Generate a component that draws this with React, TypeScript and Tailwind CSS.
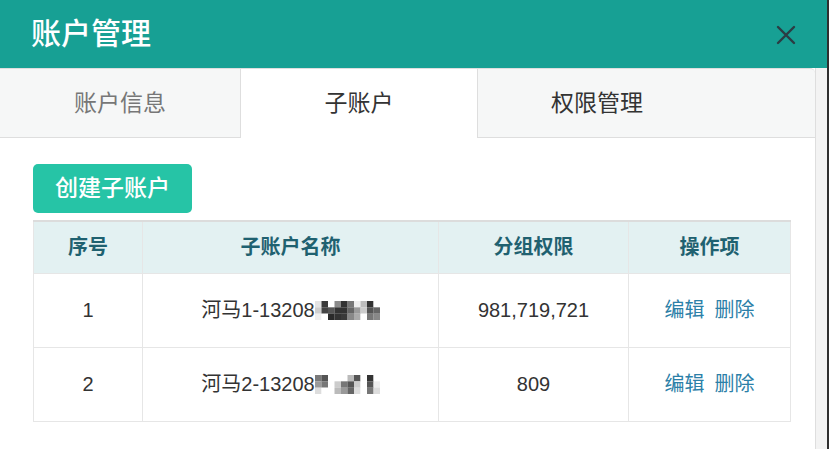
import React from "react";

const mosaics: string[][][] = [
  [
    ["#e4e4e4", "#3a3a3a", "#ffffff", "#8a8a8a", "#333333", "#777777", "#eeeeee", "#bdbdbd", "#333333", "#ffffff"],
    ["#cfcfcf", "#444444", "#555555", "#333333", "#333333", "#666666", "#9a9a9a", "#cccccc", "#555555", "#666666"],
    ["#eeeeee", "#ffffff", "#2a2a2a", "#333333", "#3a3a3a", "#888888", "#aaaaaa", "#ffffff", "#777777", "#888888"],
  ],
  [
    ["#7a7a7a", "#555555", "#ffffff", "#ffffff", "#ffffff", "#bbbbbb", "#555555", "#ffffff", "#333333", "#ffffff"],
    ["#9a9a9a", "#777777", "#ffffff", "#cccccc", "#777777", "#555555", "#cccccc", "#ffffff", "#555555", "#eeeeee"],
    ["#dddddd", "#ffffff", "#ffffff", "#bbbbbb", "#999999", "#666666", "#dddddd", "#ffffff", "#777777", "#dddddd"],
  ],
];

function Mosaic({ cells }: { cells: string[][] }) {
  return (
    <svg width="65" height="19" viewBox="0 0 65 19" className="inline-block align-middle -mt-[3px]">
      {cells.map((row, r) =>
        row.map((c, i) => (
          <rect key={`${r}-${i}`} x={i * 6.5} y={r * 6.33} width="6.6" height="6.4" fill={c} />
        ))
      )}
    </svg>
  );
}

const rows = [
  { id: 1, name: "河马1-13208", group: "981,719,721" },
  { id: 2, name: "河马2-13208", group: "809" },
];

export default function App() {
  return (
    <div className="w-[829px] h-[449px] flex bg-[#2f2f2f] overflow-hidden font-['Liberation_Sans','Noto_Sans_CJK_SC',sans-serif]">
      <div className="w-[827px] flex flex-col">
        {/* Header */}
        <div className="h-[68px] bg-[#17a094] flex items-center justify-between pl-[31px] pr-[31px]">
          <h1 className="text-[30px] leading-none text-white font-medium">账户管理</h1>
          <svg width="20" height="20" viewBox="0 0 20 20" className="mt-[1px]">
            <path d="M2 2 L18 18 M18 2 L2 18" stroke="#2c3c43" strokeWidth="2.4" strokeLinecap="round" />
          </svg>
        </div>

        <div className="flex flex-1">
          {/* Panel */}
          <div className="w-[816px] bg-white border-r border-[#dedede]">
            {/* Tabs */}
            <div className="flex h-[70px] bg-[#f6f7f7] border-t border-b border-[#dedede] rounded-tr-[5px] text-[23px]">
              <div className="w-[240px] flex items-center justify-center text-[#777]">账户信息</div>
              <div className="w-[238px] flex items-center justify-center bg-white border-l border-r border-[#dedede] -mb-px text-[#333]">
                子账户
              </div>
              <div className="w-[238px] flex items-center justify-center text-[#333]">权限管理</div>
            </div>

            {/* Content */}
            <div className="pl-[33px] pr-[26px] pt-[26px]">
              <button className="h-[49px] w-[159px] rounded-[5px] bg-[#26c4a6] text-white text-[23px] font-medium">
                创建子账户
              </button>

              <table className="mt-[7px] w-[757px] border-collapse table-fixed">
                <thead>
                  <tr className="h-[52px] bg-[#e3f1f2] text-[20px] font-bold text-[#1f6170]">
                    <th className="w-[109px] border border-t-2 border-[#e6e6e6] border-t-[#dcdcdc]">序号</th>
                    <th className="w-[296px] border border-t-2 border-[#e6e6e6] border-t-[#dcdcdc]">子账户名称</th>
                    <th className="w-[190px] border border-t-2 border-[#e6e6e6] border-t-[#dcdcdc]">分组权限</th>
                    <th className="w-[162px] border border-t-2 border-[#e6e6e6] border-t-[#dcdcdc]">操作项</th>
                  </tr>
                </thead>
                <tbody className="text-[20px] text-[#333]">
                  {rows.map((r, i) => (
                    <tr key={r.id} className="h-[74px]">
                      <td className="border border-[#e6e6e6] text-center">{r.id}</td>
                      <td className="border border-[#e6e6e6] text-center whitespace-nowrap">
                        {r.name}
                        <Mosaic cells={mosaics[i]} />
                      </td>
                      <td className="border border-[#e6e6e6] text-center">{r.group}</td>
                      <td className="border border-[#e6e6e6]">
                        <div className="flex justify-center gap-[10px] text-[#2c80a8]">
                          <a className="cursor-pointer">编辑</a>
                          <a className="cursor-pointer">删除</a>
                        </div>
                      </td>
                    </tr>
                  ))}
                </tbody>
              </table>
            </div>
          </div>

          {/* Scrollbar track */}
          <div className="flex-1 bg-[#f3f3f3]" />
        </div>
      </div>
    </div>
  );
}
